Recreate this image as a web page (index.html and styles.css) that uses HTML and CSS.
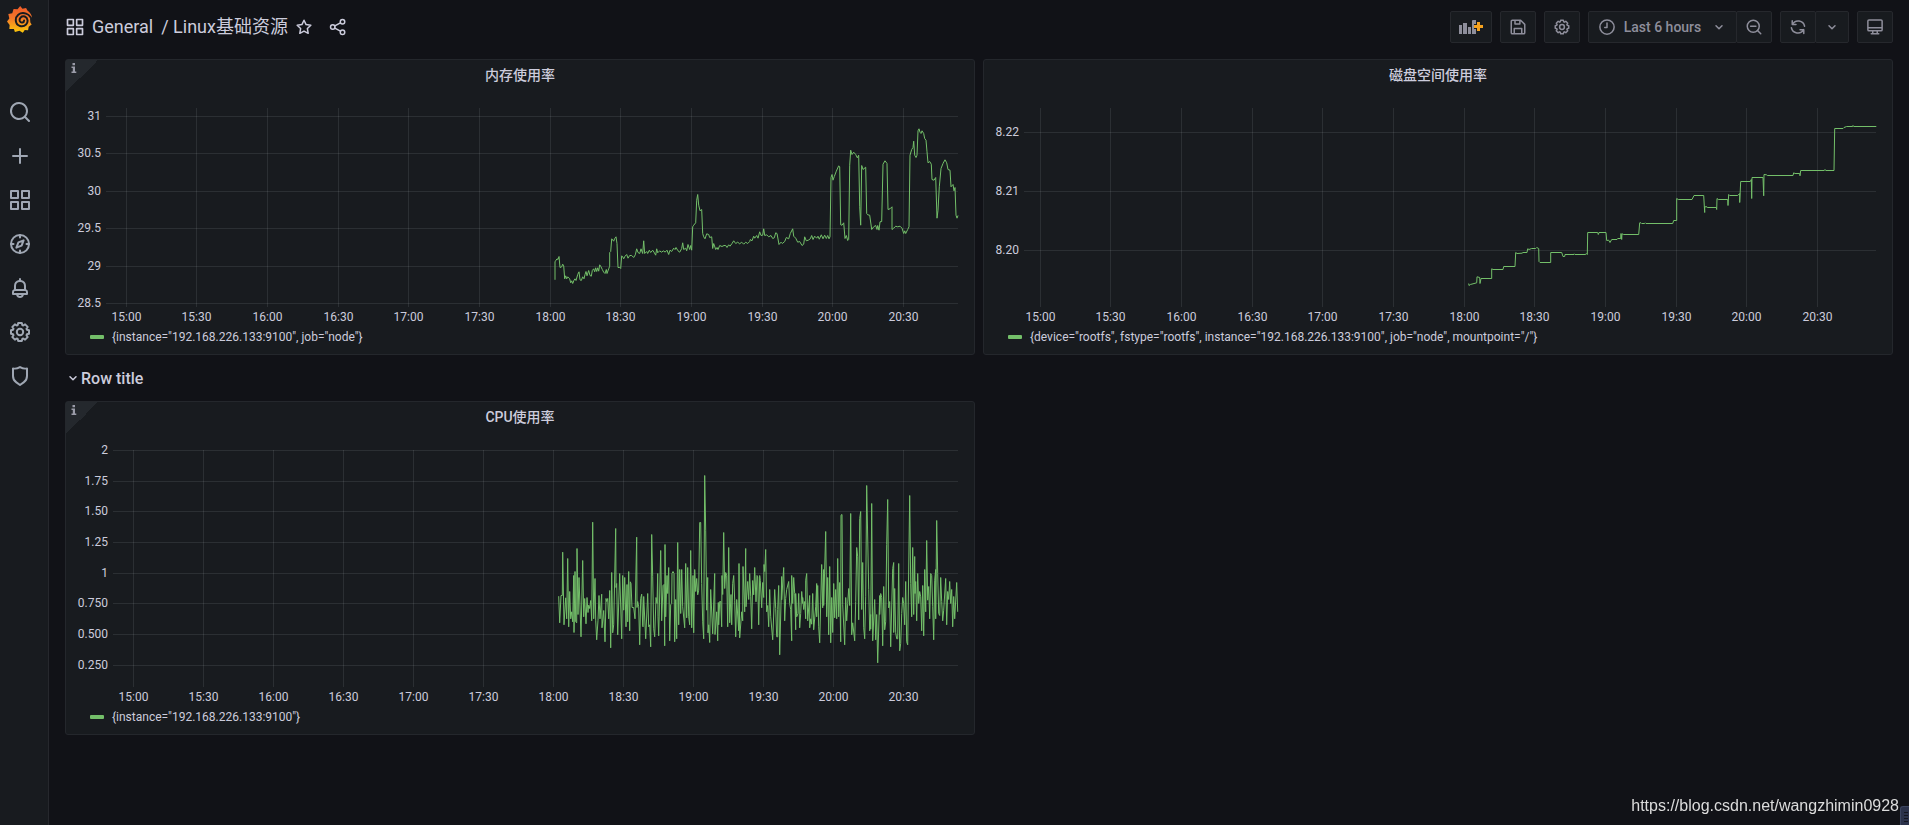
FILE: index.html
```html
<!DOCTYPE html>
<html lang="zh-CN">
<head>
<meta charset="utf-8">
<title>Linux基础资源 - Grafana</title>
<link rel="stylesheet" href="styles.css">
</head>
<body>
<svg class="sprite" aria-hidden="true">
  <symbol id="i-search" viewBox="0 0 24 24"><path d="M21.71,20.29,18,16.61A9,9,0,1,0,16.61,18l3.68,3.68a1,1,0,0,0,1.42,0A1,1,0,0,0,21.71,20.29ZM11,18a7,7,0,1,1,7-7A7,7,0,0,1,11,18Z"/></symbol>
  <symbol id="i-plus" viewBox="0 0 24 24"><path d="M19,11H13V5a1,1,0,0,0-2,0v6H5a1,1,0,0,0,0,2h6v6a1,1,0,0,0,2,0V13h6a1,1,0,0,0,0-2Z"/></symbol>
  <symbol id="i-apps" viewBox="0 0 24 24"><path d="M10,13H3a1,1,0,0,0-1,1v7a1,1,0,0,0,1,1h7a1,1,0,0,0,1-1V14A1,1,0,0,0,10,13ZM9,20H4V15H9ZM21,2H14a1,1,0,0,0-1,1v7a1,1,0,0,0,1,1h7a1,1,0,0,0,1-1V3A1,1,0,0,0,21,2ZM20,9H15V4h5Zm1,4H14a1,1,0,0,0-1,1v7a1,1,0,0,0,1,1h7a1,1,0,0,0,1-1V14A1,1,0,0,0,21,13Zm-1,7H15V15h5ZM10,2H3A1,1,0,0,0,2,3v7a1,1,0,0,0,1,1h7a1,1,0,0,0,1-1V3A1,1,0,0,0,10,2ZM9,9H4V4H9Z"/></symbol>
  <symbol id="i-compass" viewBox="0 0 24 24"><g class="line"><circle cx="12" cy="12" r="9"/><path d="M12 3v2.500M12 18.500V21M3 12h2.500M18.500 12H21M15.600 8.400l-2 5.200-5.200 2 2-5.200z"/></g></symbol>
  <symbol id="i-bell" viewBox="0 0 24 24"><path d="M18,13.18V10a6,6,0,0,0-5-5.91V3a1,1,0,0,0-2,0V4.09A6,6,0,0,0,6,10v3.18A3,3,0,0,0,4,16v2a1,1,0,0,0,1,1H8.14a4,4,0,0,0,7.72,0H19a1,1,0,0,0,1-1V16A3,3,0,0,0,18,13.18ZM8,10a4,4,0,0,1,8,0v3H8Zm4,10a2,2,0,0,1-1.720-1h3.440A2,2,0,0,1,12,20Zm6-3H6V16a1,1,0,0,1,1-1H17a1,1,0,0,1,1,1Z"/></symbol>
  <symbol id="i-cog" viewBox="0 0 24 24"><g class="line" transform="translate(12 12)"><circle r="3.200"/><path d="M6.900-2.300 9-1.800V1.800L6.900 2.300 6.500 3.250 7.640 5.090 5.090 7.640 3.250 6.500 2.300 6.900 1.800 9H-1.800L-2.300 6.900-3.250 6.500-5.090 7.640-7.640 5.090-6.500 3.250-6.900 2.300-9 1.800V-1.800L-6.900-2.300-6.500-3.250-7.640-5.090-5.090-7.640-3.250-6.500-2.300-6.900-1.800-9H1.800L2.300-6.900 3.250-6.500 5.090-7.640 7.640-5.090 6.500-3.250z"/></g></symbol>
  <symbol id="i-shield" viewBox="0 0 24 24"><path d="M19.630,3.650a1,1,0,0,0-.84-.2,8,8,0,0,1-6.220-1.270,1,1,0,0,0-1.140,0A8,8,0,0,1,5.210,3.450a1,1,0,0,0-.84.2A1,1,0,0,0,4,4.430v7.450a9,9,0,0,0,3.770,7.330l3.650,2.600a1,1,0,0,0,1.160,0l3.650-2.600A9,9,0,0,0,20,11.880V4.430A1,1,0,0,0,19.630,3.650ZM18,11.880a7,7,0,0,1-2.930,5.700L12,19.770,8.930,17.580A7,7,0,0,1,6,11.880V5.580a10,10,0,0,0,6-1.390,10,10,0,0,0,6,1.390Z"/></symbol>
  <symbol id="i-star" viewBox="0 0 24 24"><path class="line" d="M12 3l2.800 5.800 6.300.9-4.600 4.400 1.100 6.300L12 17.400l-5.600 3 1.100-6.300L2.900 9.700l6.300-.9z"/></symbol>
  <symbol id="i-share" viewBox="0 0 24 24"><g class="line"><circle cx="18" cy="5" r="3"/><circle cx="5" cy="12" r="3"/><circle cx="18" cy="19" r="3"/><path d="M15.300 6.400 7.700 10.500M7.700 13.500l7.600 4.100"/></g></symbol>
  <symbol id="i-save" viewBox="0 0 24 24"><path class="line" d="M3 4.500A1.500 1.500 0 0 1 4.500 3H15.500L21 8.500V19.500A1.500 1.500 0 0 1 19.500 21H4.500A1.500 1.500 0 0 1 3 19.500zM8 3V8H14.500V3M7 21V14H17V21"/></symbol>
  <symbol id="i-clock" viewBox="0 0 24 24"><g class="line"><circle cx="12" cy="12" r="9.500"/><path d="M12 6.500V12.500H9"/></g></symbol>
  <symbol id="i-zoom-out" viewBox="0 0 24 24"><g class="line"><circle cx="11" cy="11" r="8"/><path d="M21 21l-4.300-4.300M7.500 11h7"/></g></symbol>
  <symbol id="i-sync" viewBox="0 0 24 24"><path class="line" d="M4.500 8.500A8.800 8.800 0 0 1 20.800 11M4.300 3.500v5h5M19.500 15.500A8.800 8.800 0 0 1 3.200 13M19.700 20.500v-5h-5"/></symbol>
  <symbol id="i-monitor" viewBox="0 0 24 24"><path class="line" d="M4 2.500H20A1.500 1.500 0 0 1 21.500 4V15.500A1.500 1.500 0 0 1 20 17H4A1.500 1.500 0 0 1 2.500 15.500V4A1.500 1.500 0 0 1 4 2.500zM3 13H21M9 17.500V21M15 17.500V21M7 21H17"/></symbol>
  <symbol id="i-down" viewBox="0 0 16 16"><path class="line line-thin" d="M5 6.700 8 9.700l3-3"/></symbol>
  <symbol id="i-info" viewBox="0 0 6 10"><path d="M1.500 0h2.500v2.300H1.500zM.5 3.500H4v5H5.300V10H.5V8.500H1.800V5H.5z"/></symbol>
</svg>

<div class="app">
  <nav class="sidebar" aria-label="Main">
    <a class="logo" href="#" aria-label="Home">
      <svg viewBox="0 0 76 82">
        <defs><linearGradient id="flame" x1="0" y1="0" x2="0" y2="1"><stop offset="0" stop-color="#f05a28"/><stop offset=".45" stop-color="#f4772a"/><stop offset="1" stop-color="#fbca0a"/></linearGradient></defs>
        <path fill="url(#flame)" d="M40 0L47 8 58 6 62 14C70 19 75 27 76 36L70 38 71 50 75 56 66 63 64 74 54 73 48 81 38 75 24 79 21 70 7 70 8 58 0 47 7 38 4 24 16 22 20 9 32 10z"/>
        <path class="logo-cut" d="M76 38C70 37 72 27 58 23C38 17 25 31 27 46C29 62 48 66 58 56C65 49 64 36 54 32C44 29 36 38 39 46C42 53 52 51 52 44" />
      </svg>
    </a>
    <div class="side-links">
      <a href="#" aria-label="Search"><svg><use href="#i-search"/></svg></a>
      <a href="#" aria-label="Create"><svg><use href="#i-plus"/></svg></a>
      <a href="#" aria-label="Dashboards"><svg><use href="#i-apps"/></svg></a>
      <a href="#" aria-label="Explore"><svg><use href="#i-compass"/></svg></a>
      <a href="#" aria-label="Alerting"><svg><use href="#i-bell"/></svg></a>
      <a href="#" aria-label="Configuration"><svg><use href="#i-cog"/></svg></a>
      <a href="#" aria-label="Server Admin"><svg><use href="#i-shield"/></svg></a>
    </div>
  </nav>

  <main class="main">
    <header class="topbar">
      <svg class="icon icon-lg"><use href="#i-apps"/></svg>
      <h1 class="crumbs"><a href="#">General</a><a href="#">/ Linux基础资源</a></h1>
      <button class="icon-btn" aria-label="Mark as favorite"><svg class="icon"><use href="#i-star"/></svg></button>
      <button class="icon-btn" aria-label="Share dashboard"><svg class="icon"><use href="#i-share"/></svg></button>
      <div class="tools">
        <button class="tool tool-wide" aria-label="Add panel">
          <svg class="add-icon" viewBox="0 0 24 14"><path d="M0 5h3v9H0zM4 3h4v11H4zM9 7h3v7H9zM13 1q0-1 1-1h3v4h-2v5h2v5h-4z"/><path class="add-plus" d="M18 2h3v3h3v3h-3v3h-3V8h-3V5h3z"/></svg>
        </button>
        <button class="tool" aria-label="Save dashboard"><svg class="icon"><use href="#i-save"/></svg></button>
        <button class="tool" aria-label="Dashboard settings"><svg class="icon"><use href="#i-cog"/></svg></button>
        <div class="group">
          <button class="tool tool-time"><svg class="icon"><use href="#i-clock"/></svg><span>Last 6 hours</span><svg class="icon icon-sm"><use href="#i-down"/></svg></button>
          <button class="tool" aria-label="Zoom out time range"><svg class="icon"><use href="#i-zoom-out"/></svg></button>
        </div>
        <div class="group">
          <button class="tool" aria-label="Refresh dashboard"><svg class="icon"><use href="#i-sync"/></svg></button>
          <button class="tool tool-slim" aria-label="Refresh interval"><svg class="icon icon-sm"><use href="#i-down"/></svg></button>
        </div>
        <button class="tool" aria-label="Cycle view mode"><svg class="icon"><use href="#i-monitor"/></svg></button>
      </div>
    </header>

    <div class="grid">
      <section class="panel">
        <span class="corner"><svg><use href="#i-info"/></svg></span>
        <h2 class="panel-title">内存使用率</h2>
        <svg class="chart" data-chart="memory" role="img" aria-label="内存使用率"></svg>
        <button class="legend"><i class="swatch"></i>{instance="192.168.226.133:9100", job="node"}</button>
      </section>
      <section class="panel">
        <h2 class="panel-title">磁盘空间使用率</h2>
        <svg class="chart" data-chart="disk" role="img" aria-label="磁盘空间使用率"></svg>
        <button class="legend"><i class="swatch"></i>{device="rootfs", fstype="rootfs", instance="192.168.226.133:9100", job="node", mountpoint="/"}</button>
      </section>
      <button class="row-title"><svg class="icon icon-sm"><use href="#i-down"/></svg>Row title</button>
      <section class="panel">
        <span class="corner"><svg><use href="#i-info"/></svg></span>
        <h2 class="panel-title">CPU使用率</h2>
        <svg class="chart chart-tall" data-chart="cpu" role="img" aria-label="CPU使用率"></svg>
        <button class="legend"><i class="swatch"></i>{instance="192.168.226.133:9100"}</button>
      </section>
    </div>
  </main>
</div>
<p class="watermark">https://blog.csdn.net/wangzhimin0928</p>
<div class="dock"></div>
<script src="charts.js"></script>
</body>
</html>
```

FILE: styles.css
```css
* { box-sizing: border-box; }

body {
  margin: 0;
  background: #111217;
  color: #ccccdc;
  font-family: Roboto, "Noto Sans CJK SC", sans-serif;
  font-size: 14px;
}

a { color: inherit; text-decoration: none; }
button { font: inherit; color: inherit; background: none; border: 0; padding: 0; cursor: pointer; }
svg { fill: currentColor; display: block; }
.sprite { position: absolute; width: 0; height: 0; }
.line { fill: none; stroke: currentColor; stroke-width: 2; stroke-linejoin: round; stroke-linecap: round; }
.line-thin { stroke-width: 1.5; }
.icon { width: 18px; height: 18px; flex: none; }
.icon-sm { width: 16px; height: 16px; }
.icon-lg { width: 20px; height: 20px; }

.app { display: flex; min-height: 100vh; }

.sidebar {
  flex: none;
  width: 49px;
  background: #181b1f;
  border-right: 1px solid #26282d;
  color: #9fa7b3;
}
.logo { display: block; padding: 6px 0 0 7px; height: 90px; }
.logo svg { width: 25px; height: 27px; }
.logo-cut { fill: none; stroke: #181b1f; stroke-width: 6; stroke-linecap: round; }
.side-links { display: flex; flex-direction: column; }
.side-links a { height: 44px; display: flex; align-items: center; padding-left: 8px; }
.side-links svg { width: 24px; height: 24px; }

.main { flex: 1; min-width: 0; padding: 0 16px; }

.topbar { display: flex; align-items: center; height: 51px; padding-top: 3px; margin-bottom: 8px; }
.crumbs {
  display: flex;
  gap: 8px;
  margin: 0 0 0 7px;
  font-size: 18px;
  font-weight: 400;
  line-height: 24px;
}
.icon-btn { margin-left: 7px; }
.icon-btn + .icon-btn { margin-left: 16px; }

.tools { display: flex; gap: 8px; margin-left: auto; color: #8e8e9b; }
.group { display: flex; }
.tool {
  width: 36px;
  height: 32px;
  display: flex;
  align-items: center;
  justify-content: center;
  background: #181b1f;
  border: 1px solid #26282d;
  border-radius: 2px;
}
.tool-wide { width: 42px; }
.tool-slim { width: 34px; }
.tool-time { width: 149px; gap: 8px; font-weight: 500; }
.tool-time span { margin-right: 2px; }
.group .tool + .tool { margin-left: -1px; }
.add-icon { width: 24px; height: 14px; }
.add-plus { fill: #f5a21f; }

.grid { display: grid; grid-template-columns: 1fr 1fr; gap: 8px; }
.panel {
  position: relative;
  min-width: 0;
  padding: 0 8px 8px;
  background: #181b1f;
  border: 1px solid #24272c;
  border-radius: 3px;
}
.panel-title { margin: 0; padding-bottom: 2px; font-size: 14px; font-weight: 500; line-height: 30px; text-align: center; }
.corner {
  position: absolute;
  top: 0;
  left: 0;
  width: 32px;
  height: 32px;
  padding: 3px 0 0 5px;
  background: linear-gradient(135deg, #24282d 50%, transparent 50%);
  color: #9a9ba8;
}
.corner svg { width: 6px; height: 10px; }

.chart { width: 100%; height: 236px; font-size: 12px; fill: #ccccdc; }
.chart-tall { height: 274px; }
.gridline { stroke: rgba(240, 250, 255, .09); shape-rendering: crispEdges; }
.series { fill: none; stroke: #73bf69; stroke-width: 1; stroke-linejoin: round; }

.legend { display: flex; align-items: center; height: 18px; padding-left: 16px; font-size: 12px; white-space: nowrap; }
.swatch { width: 14px; height: 4px; margin-right: 8px; border-radius: 1px; background: #73bf69; }

.row-title {
  grid-column: 1 / -1;
  display: flex;
  align-items: center;
  height: 30px;
  font-size: 16px;
  font-weight: 500;
}

.watermark {
  position: fixed;
  right: 10px;
  bottom: 9px;
  margin: 0;
  color: #dcdcdc;
  font: 16px/20px "Liberation Sans", Arial, sans-serif;
}
.dock {
  position: fixed;
  right: 0;
  bottom: 0;
  width: 9px;
  height: 19px;
  border: 1px solid #3c4560;
  border-width: 1px 0 0 1px;
  border-radius: 3px 0 0 0;
  background: repeating-linear-gradient(#14161f 0 1px, transparent 1px 3px) 3px 5px / 4px 12px no-repeat #2b324a;
}
```

FILE: charts.js
```js
// Every series is stored on a grid of 3 units per pixel; origin is the plot's top left corner on it.
const charts = {
  memory: {
    left: 36, origin: [-1288, 55], span: [2544, 585], firstTick: 16 / 848, tickStep: 70.67 / 848,
    yTicks: [['31', 8], ['30.5', 45], ['30', 83], ['29.5', 120], ['29', 158], ['28.5', 195]],
    points: `44,569 44,515 47,510 50,506 53,508 56,499 59,532 64,530 67,522 70,527 73,566 76,557 79,566 82,560 88,566 91,578 94,572 97,580 101,570 104,566 107,571 112,553 116,545 119,569 123,571 127,560 131,566 134,553 137,544 140,557 145,541 149,556 153,558 156,541 160,536 163,545 166,533 169,544 172,533 175,543 178,524 182,530 186,538 190,546 194,550 198,538 200,550 205,536 208,528 208,487 211,484 214,446 220,453 223,445 227,440 230,460 233,532 238,532 241,535 244,497 247,500 250,506 254,498 259,493 263,504 268,496 274,496 280,502 285,494 289,476 293,487 298,490 302,476 307,490 310,452 313,490 319,484 322,490 327,480 331,487 337,480 341,486 346,495 349,476 352,488 358,482 363,486 370,482 374,486 380,480 385,493 389,480 394,484 400,474 404,478 407,472 413,482 418,486 424,475 427,458 430,478 436,474 439,482 443,463 448,478 451,466 454,480 457,410 460,405 466,398 469,330 472,313 475,345 479,362 484,358 487,430 490,440 494,446 499,431 505,433 508,442 514,440 517,475 520,460 526,478 530,472 533,478 538,466 545,469 551,466 556,466 560,472 565,464 569,468 575,460 580,452 586,460 592,456 598,461 604,456 610,462 616,456 622,460 628,454 630,448 635,452 640,438 643,444 649,436 653,444 658,425 662,436 667,435 670,416 673,436 679,434 685,440 692,436 697,445 702,443 706,428 710,430 716,463 722,456 726,460 733,454 738,442 745,446 750,430 757,416 760,438 766,444 772,456 778,454 785,466 790,462 793,440 798,452 804,450 810,446 814,436 818,448 823,438 829,444 833,438 837,447 843,434 848,446 853,435 858,445 862,436 866,446 869,440 872,262 875,253 878,270 882,259 888,243 895,227 898,230 901,404 905,405 910,398 914,445 918,436 922,451 925,448 928,225 931,180 935,193 940,186 946,193 951,203 955,195 958,350 961,405 964,226 968,238 976,231 979,370 982,374 988,375 994,418 1000,410 1006,406 1010,418 1012,406 1016,420 1019,395 1024,394 1028,222 1034,212 1040,220 1043,358 1049,356 1055,350 1055,418 1060,414 1066,408 1072,410 1079,408 1085,414 1090,430 1093,422 1096,430 1102,418 1106,410 1109,195 1114,178 1118,172 1120,153 1123,195 1127,202 1130,195 1133,122 1136,116 1139,126 1142,130 1145,122 1150,130 1153,145 1157,150 1160,185 1163,218 1168,214 1173,222 1175,268 1181,270 1186,262 1190,384 1193,360 1197,290 1202,235 1208,220 1214,209 1219,218 1223,238 1229,240 1232,290 1238,283 1241,302 1244,292 1247,375 1250,384 1253,376`
  },
  disk: {
    left: 36, origin: [-1234, 55], span: [2544, 585], firstTick: 12 / 848, tickStep: 70.67 / 848,
    yTicks: [['8.22', 24], ['8.21', 83], ['8.20', 142]],
    points: `85,580 86,586 90,583 98,581 109,578 110,560 118,562 119,580 122,565 154,565 154,536 158,538 188,538 190,529 224,529 226,487 230,490 245,489 248,487 260,487 262,476 266,478 274,475 286,475 289,472 295,475 296,514 299,517 331,517 331,487 364,487 368,499 373,499 374,493 401,493 402,491 404,493 436,493 438,490 441,493 442,427 472,427 474,433 476,427 497,427 499,451 505,450 509,457 514,448 530,448 532,445 541,445 542,430 544,448 545,431 550,433 595,433 598,398 602,398 604,400 613,400 615,398 617,400 697,400 700,391 709,391 709,325 714,328 755,328 761,316 790,316 793,367 793,350 800,350 801,352 828,352 829,358 830,325 834,328 862,328 863,346 865,313 868,316 892,316 898,310 898,337 901,274 930,274 933,268 934,325 935,262 968,262 970,317 971,253 979,254 981,256 1058,256 1060,248 1064,250 1078,250 1079,257 1081,241 1152,241 1154,238 1156,241 1181,241 1183,115 1208,115 1211,112 1219,109 1237,109 1238,106 1240,109 1308,109`
  },
  cpu: {
    left: 43, origin: [-1267, 61], span: [2523, 699], firstTick: 16 / 841, tickStep: 70.08 / 841,
    yTicks: [['2', 0], ['1.75', 31], ['1.50', 61], ['1.25', 92], ['1', 123], ['0.750', 153], ['0.500', 184], ['0.250', 215]],
    points: `55,498 58,578 62,496 66,496 67,366 71,584 76,503 79,566 82,385 85,590 88,484 91,566 94,545 97,575 100,436 101,607 104,424 106,575 109,578 110,355 113,553 116,442 122,620 127,391 130,560 133,505 137,581 140,502 143,547 145,525 148,535 151,511 154,572 157,276 160,566 164,445 166,570 169,629 173,570 176,496 179,566 184,492 185,593 190,541 194,635 197,505 199,514 202,505 205,566 208,481 211,653 214,427 217,608 220,584 226,295 227,472 229,460 232,614 238,430 244,626 247,436 250,540 253,442 257,590 260,463 262,575 265,424 268,602 270,455 272,460 275,532 280,532 284,566 289,321 290,532 292,514 295,530 298,644 301,505 304,492 307,587 308,590 310,499 316,626 322,490 325,590 328,584 331,650 334,313 337,440 340,596 343,620 347,502 350,520 352,430 353,560 355,617 361,361 364,572 368,466 371,463 373,647 374,343 376,560 380,436 382,490 385,412 388,632 391,524 394,520 395,430 398,424 401,430 403,635 406,508 409,626 412,337 415,584 418,418 421,550 424,418 427,530 433,593 436,400 439,563 442,412 445,560 448,584 451,361 454,593 458,436 460,608 463,418 466,484 469,445 472,494 475,480 478,277 481,277 484,460 487,575 490,626 493,136 496,300 499,540 502,442 503,608 505,584 508,637 511,478 517,611 523,430 524,613 529,545 532,632 534,517 535,584 538,514 541,514 544,590 545,436 547,493 550,307 553,475 556,427 559,436 562,590 565,352 568,578 572,493 574,584 577,460 580,436 583,510 586,620 589,508 595,602 596,400 598,623 604,545 607,572 608,409 613,545 616,355 617,530 622,454 625,508 628,430 631,500 634,596 637,451 640,494 643,412 647,515 650,436 652,440 655,584 658,436 660,451 664,533 667,457 670,502 671,403 673,424 676,358 679,545 682,526 685,590 688,478 691,560 697,629 703,478 706,535 709,620 712,620 712,538 715,466 718,674 724,439 724,509 730,412 733,572 736,505 739,478 745,454 748,520 751,538 754,632 754,436 757,520 760,442 763,490 766,599 766,490 769,560 773,550 775,490 778,593 781,550 784,484 787,520 787,502 790,538 793,514 796,566 796,450 799,430 802,572 808,496 808,593 811,566 814,582 817,490 820,599 826,530 829,460 829,560 832,466 835,590 838,638 844,403 847,533 850,418 850,526 856,304 859,560 862,442 865,614 868,409 871,638 874,502 877,607 880,460 883,563 886,478 889,566 892,385 895,560 898,457 901,635 902,255 905,253 907,524 913,644 916,502 919,572 922,520 925,475 928,526 931,250 934,614 937,578 943,632 946,514 949,352 952,380 955,569 958,265 961,244 964,538 967,397 970,593 973,626 976,500 979,166 985,478 988,602 991,553 991,597 994,220 997,632 1003,508 1006,629 1009,553 1012,698 1018,496 1018,553 1021,490 1024,502 1027,647 1030,469 1033,599 1036,575 1039,343 1042,208 1045,533 1048,514 1051,650 1057,415 1060,397 1060,607 1063,475 1066,608 1069,626 1072,626 1075,400 1078,662 1081,640 1084,550 1087,502 1090,520 1093,584 1096,454 1099,635 1102,644 1108,196 1111,460 1114,560 1117,352 1120,553 1123,379 1124,490 1126,454 1129,572 1132,430 1135,520 1138,484 1141,500 1144,602 1147,466 1150,617 1153,418 1156,545 1159,331 1162,510 1165,469 1168,566 1171,430 1174,436 1177,530 1180,629 1183,450 1186,418 1186,566 1189,271 1192,430 1195,550 1198,556 1201,442 1204,514 1207,572 1210,540 1216,445 1219,584 1222,484 1225,508 1228,454 1231,520 1234,478 1237,590 1240,499 1243,566 1249,457 1252,545`
  }
};

const times = ['15:00', '15:30', '16:00', '16:30', '17:00', '17:30', '18:00', '18:30', '19:00', '19:30', '20:00', '20:30'];
const TOP = 16, BOTTOM = 25, RIGHT = 8, TICK = 4;

function add(svg, tag, attrs, text) {
  const el = document.createElementNS('http://www.w3.org/2000/svg', tag);
  for (const name in attrs) el.setAttribute(name, attrs[name]);
  if (text) el.textContent = text;
  svg.appendChild(el);
}

function draw(svg) {
  const c = charts[svg.dataset.chart];
  const box = svg.getBoundingClientRect();
  const width = box.width - c.left - RIGHT;
  const height = box.height - TOP - BOTTOM;
  svg.replaceChildren();

  for (const [label, offset] of c.yTicks) {
    const y = TOP + offset + 0.5;
    add(svg, 'line', { class: 'gridline', x1: c.left - TICK, x2: c.left + width, y1: y, y2: y });
    add(svg, 'text', { x: c.left - 9, y: y + 3, 'text-anchor': 'end' }, label);
  }
  times.forEach((label, i) => {
    const x = Math.floor(c.left + (c.firstTick + i * c.tickStep) * width) + 0.5;
    add(svg, 'line', { class: 'gridline', x1: x, x2: x, y1: TOP, y2: TOP + height + TICK });
    add(svg, 'text', { x: x, y: TOP + height + 18, 'text-anchor': 'middle' }, label);
  });
  const path = c.points.split(' ').map(pair => {
    const [px, py] = pair.split(',').map(Number);
    const x = c.left + (px - c.origin[0]) / c.span[0] * width + 1;
    const y = TOP + (py - c.origin[1]) / c.span[1] * height + 0.5;
    return x.toFixed(1) + ',' + y.toFixed(1);
  }).join(' ');
  add(svg, 'polyline', { class: 'series', points: path });
}

function drawAll() {
  document.querySelectorAll('.chart').forEach(draw);
}
drawAll();
window.addEventListener('resize', drawAll);
```
